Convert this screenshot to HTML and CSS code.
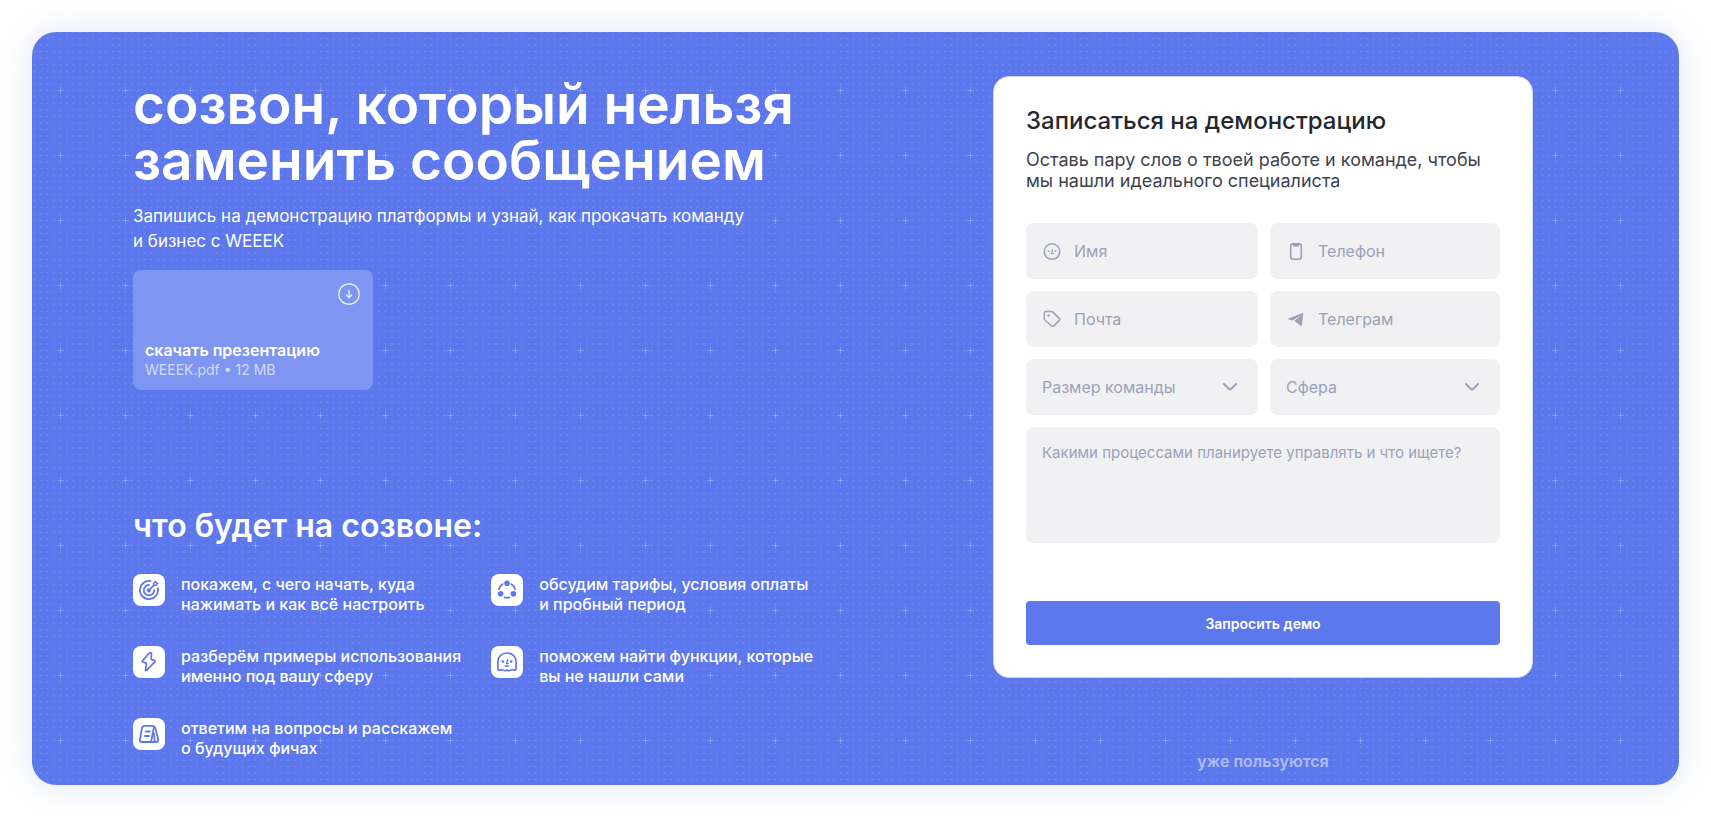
FILE: index.html
```html
<!doctype html>
<html lang="ru">

<head>
  <meta charset="UTF-8">
  <meta name="viewport" content="width=device-width, initial-scale=1">
  <title>WEEEK — демонстрация</title>
  <link rel="stylesheet" href="styles.css">
</head>

<body>
  <main class="panel">
    <svg class="pattern" aria-hidden="true">
      <defs>
        <pattern id="dots" x="2.5" y="6.5" width="6.5" height="6.5" patternUnits="userSpaceOnUse" patternTransform="translate(-3.25 -3.25)">
          <rect x="2.75" y="2.75" width="1" height="1" fill="#fff" fill-opacity=".25" />
        </pattern>
        <pattern id="pluses" x="-4" y="26" width="65" height="65" patternUnits="userSpaceOnUse">
          <path d="M29 32.5h7M32.5 29v7" stroke="#fff" stroke-opacity=".2" />
        </pattern>
      </defs>
      <rect width="100%" height="100%" fill="url(#dots)" />
      <rect width="100%" height="100%" fill="url(#pluses)" />
    </svg>

    <section class="intro">
      <h1 class="title">созвон, который нельзя<br>заменить сообщением</h1>
      <p class="lead">Запишись на демонстрацию платформы и узнай, как прокачать команду<br>и бизнес с WEEEK</p>

      <a class="download" href="#">
        <svg class="download-icon" viewBox="0 0 22 22" width="22" height="22" fill="none" stroke="currentColor" stroke-linecap="round" stroke-linejoin="round">
          <circle cx="11" cy="11" r="10.2" stroke-width="1.2" />
          <path d="M11 7.5v7M8.3 12l2.7 2.7 2.7-2.7" stroke-width="1.3" />
        </svg>
        <span class="download-name">скачать презентацию</span>
        <span class="download-info">WEEEK.pdf • 12 MB</span>
      </a>

      <h2 class="subtitle">что будет на созвоне:</h2>
      <ul class="features">
        <li class="feature">
          <span class="feature-icon">
            <svg viewBox="0 0 20 20" width="20" height="20" fill="none" stroke="currentColor" stroke-width="1.8" stroke-linecap="round">
              <path d="M11.5 1.1A9.1 9.1 0 1 0 18.9 8.5" />
              <path d="M10 5a5.2 5.2 0 1 0 5.2 5.2" />
              <path d="M10 10.2l5-5" />
              <path d="M9.2 9.2a1.3 1.3 0 1 0 1.8 1.8" />
              <path d="M14.6 5.4V3.3L16.7 1.2l.4 1.7 1.8.4-2.1 2.1z" stroke-width="1.4" stroke-linejoin="round" />
            </svg>
          </span>
          <p>покажем, с чего начать, куда<br>нажимать и как всё настроить</p>
        </li>
        <li class="feature">
          <span class="feature-icon">
            <svg viewBox="0 0 20 20" width="20" height="20" fill="none" stroke="currentColor" stroke-width="1.7" stroke-linecap="round">
              <path d="M5.7 4.1A8 8 0 0 0 2 9.3M14.3 4.1A8 8 0 0 1 18 9.3M7.5 17.4a8 8 0 0 0 5 0" />
              <g fill="currentColor" stroke="none">
                <circle cx="10" cy="3.2" r="2.8" />
                <circle cx="3.6" cy="13.8" r="2.8" />
                <circle cx="16.4" cy="13.8" r="2.8" />
              </g>
            </svg>
          </span>
          <p>обсудим тарифы, условия оплаты<br>и пробный период</p>
        </li>
        <li class="feature">
          <span class="feature-icon">
            <svg viewBox="0 0 20 20" width="20" height="20" fill="none" stroke="currentColor" stroke-width="1.7" stroke-linejoin="round">
              <path d="M10.4 1L3.6 8.6q-.7 1 .5 1.4l2.6.9q.9.4.7 1.3l-.9 5.6q-.1 1.4 1 .6l8.3-8.6q.8-1-.4-1.4l-2.5-.8q-.9-.4-.7-1.3l.3-4.8q-.1-1.5-2.1-.5z" />
            </svg>
          </span>
          <p>разберём примеры использования<br>именно под вашу сферу</p>
        </li>
        <li class="feature">
          <span class="feature-icon">
            <svg viewBox="0 0 20 20" width="20" height="20" fill="none" stroke="currentColor" stroke-width="1.7" stroke-linecap="round" stroke-linejoin="round">
              <path d="M.9 16.5V9.800C.9 4.500 4.800 1 10 1s9.100 3.500 9.100 8.800v6.700c0 1.600-1 2.100-2.500 1.400-1.200-.6-2-.5-3 .2-1.200.8-2 .8-3.100.1-.4-.2-.6-.2-1 0-1.100.7-1.900.7-3.100-.1-1-.7-1.800-.8-3-.2-1.500.7-2.500.2-2.500-1.400z" />
              <path d="M10.700 7.600l-1.200 4h2M8 14h3.500" stroke-width="1.300" />
              <g fill="currentColor" stroke="none">
                <circle cx="5.800" cy="9.600" r="1.300" />
                <circle cx="14.200" cy="9.600" r="1.300" />
              </g>
            </svg>
          </span>
          <p>поможем найти функции, которые<br>вы не нашли сами</p>
        </li>
        <li class="feature">
          <span class="feature-icon">
            <svg viewBox="0 0 20 20" width="20" height="20" fill="none" stroke="currentColor" stroke-width="1.8" stroke-linecap="round" stroke-linejoin="round">
              <path d="M12 18H2.800Q.5 18 .9 15.700L3 4.200Q3.500 1.800 5.700 1.800h7.600q1.900 0 1.500 2.200z" />
              <path d="M14.800 2.200q1.200.8 1.700 2.300l2.600 10.800q.5 2.700-1.900 2.700H12M6.800 7.500h4M5.900 12h4M14.900 9.500l.9 8" />
            </svg>
          </span>
          <p>ответим на вопросы и расскажем<br>о будущих фичах</p>
        </li>
      </ul>
    </section>

    <aside class="side">
      <form class="card">
        <h2 class="card-title">Записаться на демонстрацию</h2>
        <p class="card-text">Оставь пару слов о твоей работе и команде, чтобы<br>мы нашли идеального специалиста</p>

        <div class="fields">
          <label class="field">
            <svg viewBox="0 0 20 20" width="20" height="20" fill="none" stroke="currentColor" stroke-width="1.5" stroke-linecap="round" stroke-linejoin="round">
              <circle cx="10" cy="10.500" r="7.800" />
              <path d="M10.500 8.500l-.9 3.800h1.600" stroke-width="1.200" />
              <g fill="currentColor" stroke="none">
                <circle cx="6.500" cy="10.200" r="1" />
                <circle cx="13.500" cy="10.200" r="1" />
              </g>
            </svg>
            <input type="text" placeholder="Имя" aria-label="Имя">
          </label>
          <label class="field">
            <svg viewBox="0 0 20 20" width="20" height="20" fill="none" stroke="currentColor" stroke-width="1.6">
              <rect x="4.700" y="2.700" width="10.600" height="15.600" rx="2.500" />
              <path d="M7 3h6v1.500q0 1-1 1H8q-1 0-1-1z" fill="currentColor" stroke="none" />
            </svg>
            <input type="tel" placeholder="Телефон" aria-label="Телефон">
          </label>
          <label class="field">
            <svg viewBox="0 0 20 20" width="20" height="20" fill="none" stroke="currentColor" stroke-width="1.5" stroke-linejoin="round">
              <path d="M4 2.500h5.500q.9 0 1.500.6l6.200 6.300q1.100 1.100 0 2.200l-5.300 5.300q-1.200 1.100-2.300 0L3 11.300q-.7-.6-.7-1.600V4.200Q2.300 2.500 4 2.500z" />
              <circle cx="6.500" cy="6.500" r="1.200" fill="currentColor" stroke="none" />
            </svg>
            <input type="email" placeholder="Почта" aria-label="Почта">
          </label>
          <label class="field">
            <svg viewBox="0 0 20 20" width="20" height="20" fill="currentColor">
              <path d="M2.600 9.600L16 4.200q1.400-.5 1.200 1l-1.300 10.500q-.3 1.400-1.600.7l-5.900-4.300 6.100-5.300-7.900 4.600-4-.9q-1.100-.4 0-.9z" />
            </svg>
            <input type="text" placeholder="Телеграм" aria-label="Телеграм">
          </label>
          <label class="field field-select">
            <select aria-label="Размер команды">
              <option>Размер команды</option>
            </select>
            <svg viewBox="0 0 16 16" width="16" height="16" fill="none" stroke="currentColor" stroke-width="2" stroke-linecap="round" stroke-linejoin="round">
              <path d="M2 5l5 5q1 .9 2 0l5-5" />
            </svg>
          </label>
          <label class="field field-select">
            <select aria-label="Сфера">
              <option>Сфера</option>
            </select>
            <svg viewBox="0 0 16 16" width="16" height="16" fill="none" stroke="currentColor" stroke-width="2" stroke-linecap="round" stroke-linejoin="round">
              <path d="M2 5l5 5q1 .9 2 0l5-5" />
            </svg>
          </label>
          <textarea class="message" placeholder="Какими процессами планируете управлять и что ищете?" aria-label="Какими процессами планируете управлять и что ищете?"></textarea>
        </div>

        <button class="submit" type="submit">Запросить демо</button>
      </form>
      <p class="users">уже пользуются</p>
    </aside>
  </main>
</body>

</html>
```

FILE: styles.css
```css
* {
  box-sizing: border-box;
}

body {
  margin: 0;
  padding: 32px;
  background: #fff;
  color: #fff;
  font-family: Inter, "Noto Sans", sans-serif;
}

h1,
h2,
p,
ul {
  margin: 0;
  padding: 0;
}

.panel {
  position: relative;
  display: flex;
  justify-content: space-between;
  gap: 32px;
  padding: 44px 146px 14px 101px;
  overflow: hidden;
  border-radius: 24px;
  background: #5d78ed;
  box-shadow: 0 0 32px rgba(93, 120, 237, 0.2);
}

.pattern {
  position: absolute;
  inset: 0;
  width: 100%;
  height: 100%;
}

.intro,
.side {
  position: relative;
}

.title {
  font-size: 55px;
  line-height: 56px;
  font-weight: 600;
}

.lead {
  margin-top: 16px;
  font-size: 17px;
  line-height: 25px;
}

/* presentation file */
.download {
  display: flex;
  flex-direction: column;
  width: 240px;
  height: 120px;
  margin-top: 16px;
  padding: 13px 13px 10px 12px;
  border-radius: 8px;
  background: #7e95f1;
  color: #fff;
  text-decoration: none;
}

.download-icon {
  align-self: flex-end;
  margin-bottom: auto;
  opacity: 0.9;
}

.download-name {
  font-size: 16px;
  line-height: 20px;
  font-weight: 600;
}

.download-info {
  font-size: 14px;
  line-height: 20px;
  opacity: 0.65;
}

.subtitle {
  margin-top: 116px;
  font-size: 32px;
  line-height: 40px;
  font-weight: 600;
}

.features {
  display: grid;
  grid-template-columns: max-content max-content;
  gap: 32px 30px;
  margin-top: 28px;
  list-style: none;
}

.feature {
  display: flex;
  gap: 16px;
  font-size: 16px;
  line-height: 20px;
  font-weight: 450;
}

.feature-icon {
  display: flex;
  align-items: center;
  justify-content: center;
  flex: none;
  width: 32px;
  height: 32px;
  border-radius: 8px;
  background: #fff;
  color: #5d78ed;
}

/* form */
.side {
  flex: none;
  width: 540px;
}

.card {
  padding: 32px;
  border: 1px solid #d3d8e5;
  border-radius: 16px;
  background: #fff;
  color: #26272f;
}

.card-title {
  font-size: 24px;
  line-height: 24px;
  font-weight: 500;
}

.card-text {
  margin-top: 16px;
  color: #40424f;
  font-size: 18px;
  line-height: 21px;
}

.fields {
  display: grid;
  grid-template-columns: minmax(0, 232fr) minmax(0, 230fr);
  gap: 12px;
  margin-top: 32px;
}

.field {
  display: flex;
  align-items: center;
  gap: 12px;
  height: 56px;
  padding: 0 16px;
  border-radius: 8px;
  background: #f1f1f4;
  color: #9aa1b9;
}

.field svg {
  flex: none;
}

.field input,
.field select,
.message {
  min-width: 0;
  border: 0;
  outline: 0;
  background: transparent;
  font-family: inherit;
  font-size: 16px;
  line-height: 20px;
}

.field input,
.field select {
  flex: 1;
  padding: 0;
  appearance: none;
}

.field input,
.message {
  color: #26272f;
}

.field select {
  color: #9aa1b9;
}

.field-select {
  padding-right: 20px;
}

.field input::placeholder,
.message::placeholder {
  color: #9aa1b9;
  opacity: 1;
}

.message {
  grid-column: 1 / -1;
  height: 116px;
  padding: 16px;
  border-radius: 8px;
  background: #f1f1f4;
  font-size: 15px;
  resize: none;
}

.submit {
  display: block;
  width: 100%;
  height: 44px;
  margin-top: 58px;
  border: 0;
  border-radius: 4px;
  background: #5d78ed;
  color: #fff;
  font-family: inherit;
  font-size: 14px;
  font-weight: 600;
}

.users {
  margin-top: 73px;
  color: rgba(255, 255, 255, 0.5);
  font-size: 16px;
  line-height: 20px;
  font-weight: 600;
  text-align: center;
}
```
